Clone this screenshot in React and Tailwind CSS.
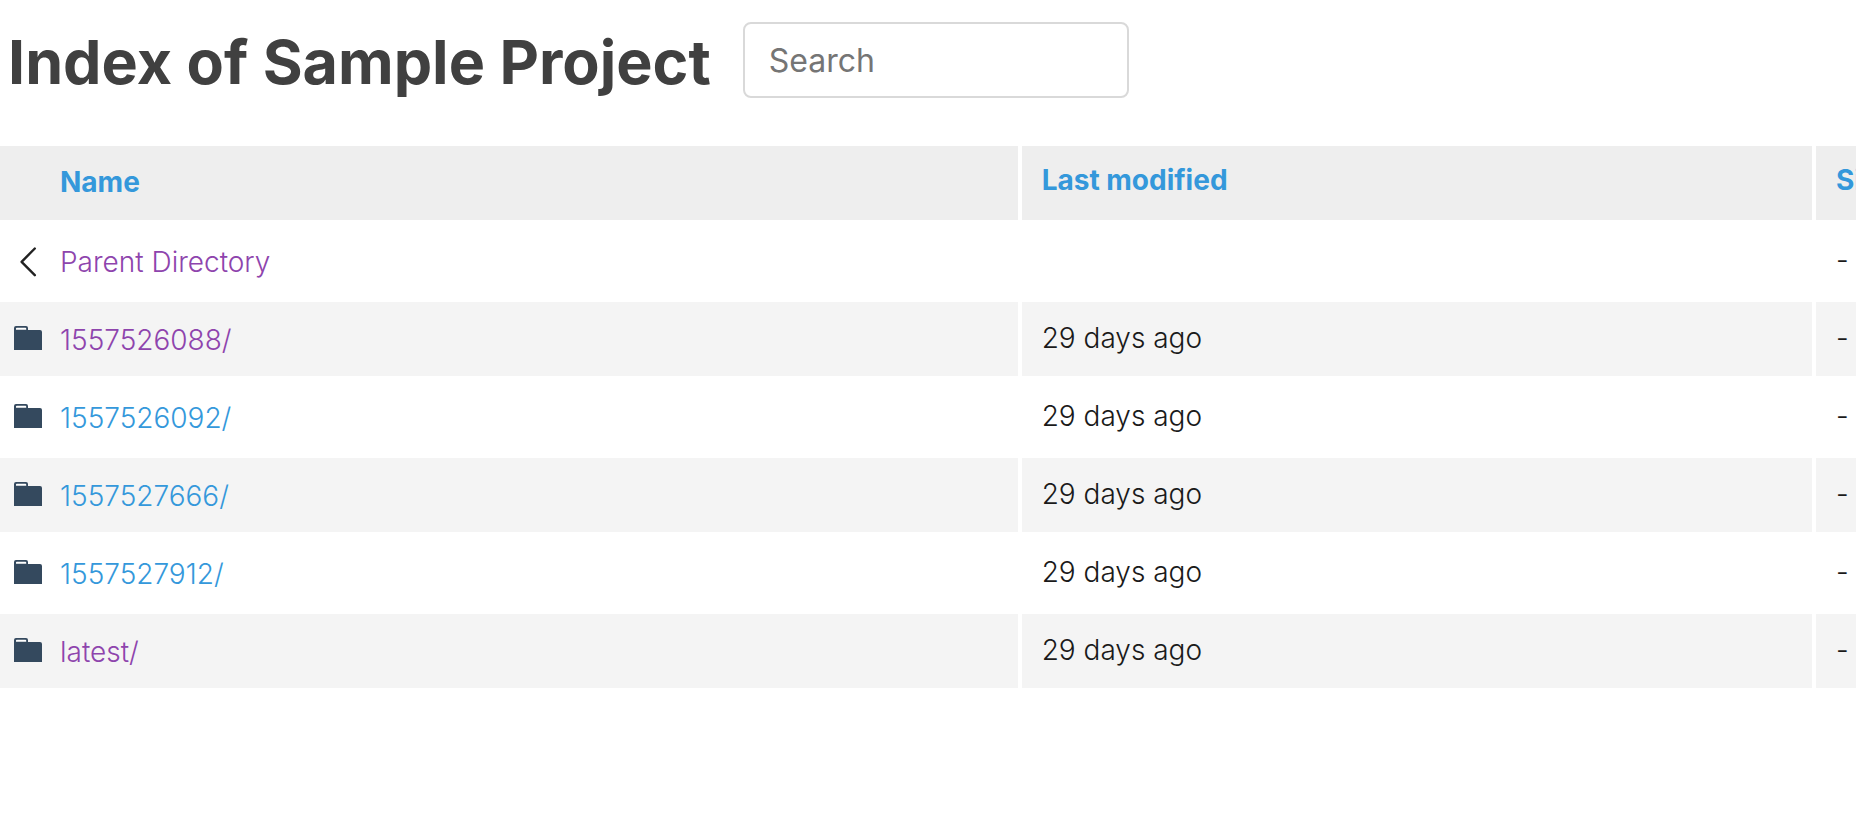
import React from 'react';

const rows = [
  { name: '1557526088/', visited: true },
  { name: '1557526092/', visited: false },
  { name: '1557527666/', visited: false },
  { name: '1557527912/', visited: false },
  { name: 'latest/', visited: true },
];

function BackIcon() {
  return (
    <svg className="h-10 w-7 shrink-0" viewBox="0 0 28 40" fill="none" stroke="#222" strokeWidth="2.4" strokeLinecap="round" strokeLinejoin="round" aria-hidden="true">
      <path d="M20.8 6.5 7.6 19.8 20.8 33.2" />
    </svg>
  );
}

function FolderIcon() {
  return (
    <svg className="h-10 w-7 shrink-0" viewBox="0 0 28 40" aria-hidden="true">
      <rect x="1" y="7" width="12" height="5" fill="#fff" />
      <path
        fill="#34495e"
        fillRule="evenodd"
        d="M0 30V8a2 2 0 0 1 2-2h10a2 2 0 0 1 2 2v2h12a2 2 0 0 1 2 2v18ZM2 9.8h10.2V8.6a.8.8 0 0 0-.8-.8H2.8a.8.8 0 0 0-.8.8Z"
      />
    </svg>
  );
}

function NameCell({ icon, visited, children }) {
  return (
    <td className="p-0">
      <div className="flex gap-[18px] pt-[18px] pr-5 pb-4 pl-3.5">
        {icon}
        <a href="#" className={visited ? 'text-[#8e44ad]' : 'text-[#3498db]'}>{children}</a>
      </div>
    </td>
  );
}

export default function App() {
  return (
    <main className="overflow-hidden bg-white font-['Inter',sans-serif] text-[28px] leading-10 font-light text-[#1a1a1a]">
      <header className="flex items-center gap-8 px-2 pt-[22px] pb-11">
        <h1 className="pt-1 text-[61px] leading-[72px] font-bold whitespace-nowrap text-[#404040]">Index of Sample Project</h1>
        <input
          type="search"
          aria-label="Search"
          placeholder="Search"
          className="h-[76px] w-[386px] rounded-lg border-2 border-[#d9d9d9] px-6 text-[32px] font-normal placeholder:text-[#757575]"
        />
      </header>
      <table className="-mx-1 w-[106%] table-fixed border-separate border-spacing-1">
        <colgroup>
          <col className="w-[52.15%]" />
          <col className="w-[40.5%]" />
          <col />
        </colgroup>
        <thead>
          <tr className="text-left align-top">
            <th className="bg-[#eee] pt-4 pr-5 pb-[18px] pl-[60px]"><a href="#" className="font-bold text-[#3498db]">Name</a></th>
            <th className="bg-[#eee] px-5 pt-3.5 pb-5"><a href="#" className="font-bold text-[#3498db]">Last modified</a></th>
            <th className="bg-[#eee] px-5 pt-3.5 pb-5"><a href="#" className="font-bold text-[#3498db]">Size</a></th>
          </tr>
        </thead>
        <tbody>
          <tr className="align-top">
            <NameCell icon={<BackIcon />} visited>Parent Directory</NameCell>
            <td className="px-5 pt-4 pb-[18px]"></td>
            <td className="px-5 pt-4 pb-[18px]">-</td>
          </tr>
          {rows.map((row) => (
            <tr key={row.name} className="align-top odd:*:bg-white even:*:bg-[#f4f4f4]">
              <NameCell icon={<FolderIcon />} visited={row.visited}>{row.name}</NameCell>
              <td className="px-5 pt-4 pb-[18px]">29 days ago</td>
              <td className="px-5 pt-4 pb-[18px]">-</td>
            </tr>
          ))}
        </tbody>
      </table>
    </main>
  );
}
